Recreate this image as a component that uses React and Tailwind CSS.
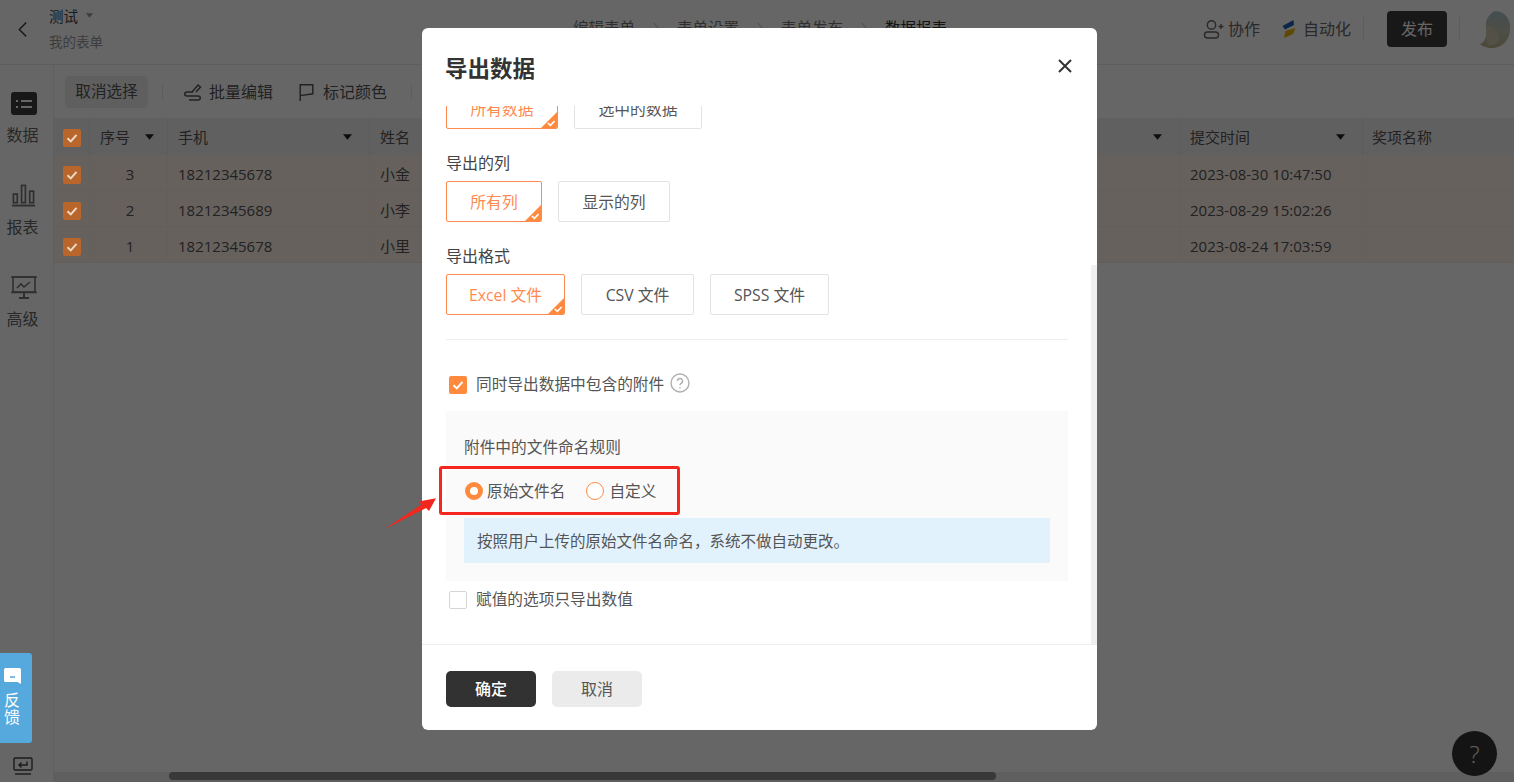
import React from "react";

const FONT = "font-['Open_Sans','Noto_Sans_CJK_SC',sans-serif]";

function Check({ className = "w-[14px] h-[14px]" }) {
  return (
    <svg viewBox="0 0 14 14" className={className} fill="none" stroke="currentColor" strokeWidth="2">
      <path d="M2.5 7.2 L5.8 10.4 L11.5 3.8" />
    </svg>
  );
}

function TableCheck() {
  return (
    <span className="relative z-10 w-[18px] h-[18px] rounded-[2px] bg-[#b9662c] text-[#ecd9c8] flex items-center justify-center">
      <Check />
    </span>
  );
}

function Caret() {
  return (
    <svg viewBox="0 0 10 6" className="w-[9px] h-[6px] text-[#222]" fill="currentColor">
      <path d="M0 0 H10 L5 6 Z" />
    </svg>
  );
}

function HeadCell({ w, label, pr }) {
  return (
    <div className={`${w} ${pr} shrink-0 h-full flex items-center justify-between pl-[10px] border-r border-[#e6e6e6]`}>
      <span>{label}</span>
      <Caret />
    </div>
  );
}

function Row({ no, phone, name, time }) {
  return (
    <div className="h-[36px] flex items-center bg-[#fff3e8] border-b border-[#f5ece4] text-[#555]">
      <div className="w-[36px] shrink-0 h-full flex items-center pl-[9px] pt-[4px]"><TableCheck /></div>
      <div className="w-[78px] shrink-0 h-full flex items-center justify-center pl-[2px] pt-[4px] border-x border-[#f8efe7]">{no}</div>
      <div className="w-[202px] shrink-0 h-full flex items-center pl-[10px] pt-[4px] border-r border-[#f8efe7]">{phone}</div>
      <div className="w-[810px] shrink-0 h-full flex items-center pl-[10px] pt-[4px] border-r border-[#f8efe7]">{name}</div>
      <div className="w-[183px] shrink-0 h-full flex items-center pl-[10px] pt-[4px] border-r border-[#f8efe7]">{time}</div>
      <div className="grow h-full" />
    </div>
  );
}

function NavItem({ icon, label }) {
  return (
    <div className="h-[92px] w-[45px] flex flex-col items-center justify-start pt-[27px] gap-[9px] text-[#666]">
      {icon}
      <span className="text-[16px] leading-[22px]">{label}</span>
    </div>
  );
}

function Choice({ label, selected, w }) {
  return (
    <div className={`${w} h-[41px] shrink-0 relative rounded-[2px] border flex items-center justify-center pt-[2px] text-[15.8px] overflow-hidden ${selected ? "border-[#ff8a50] text-[#ff8a50]" : "border-[#e3e3e3] text-[#555]"}`}>
      {label}
      {selected && (
        <svg viewBox="0 0 16 16" className="absolute right-0 bottom-0 w-[16px] h-[16px]">
          <path d="M16 0 V16 H0 Z" fill="#ff8a3d" />
          <path d="M6.8 11 L9.4 13.4 L13.6 9" fill="none" stroke="#fff" strokeWidth="1.6" />
        </svg>
      )}
    </div>
  );
}

function Sep() {
  return (
    <span className="w-[42px] flex justify-center text-[#aaa]">
      <svg viewBox="0 0 8 16" className="w-[7px] h-[14px]" fill="none" stroke="currentColor" strokeWidth="1"><path d="M1 1 L7 8 L1 15" /></svg>
    </span>
  );
}

export default function App() {
  return (
    <div className={`${FONT} relative w-full h-screen overflow-hidden bg-white text-[15px] text-[#333]`}>
      {/* Page */}
      <header className="h-[65px] flex items-center pb-[6px] border-b border-[#eaeaea]">
        <div className="w-[49px] shrink-0 flex justify-center pr-[4px] text-[#444]">
          <svg viewBox="0 0 12 18" className="w-[11px] h-[17px]" fill="none" stroke="currentColor" strokeWidth="1.6"><path d="M10 1.5 L2.5 9 L10 16.5" /></svg>
        </div>
        <div className="flex flex-col w-[200px] mt-[2px]">
          <div className="flex items-center gap-[8px] text-[#444] text-[14.5px] leading-[20px] mt-[-2px]">
            <span>测试</span>
            <svg viewBox="0 0 8 5" className="w-[7px] h-[5px] text-[#999] mb-[3px]" fill="currentColor"><path d="M0 0 H8 L4 5 Z" /></svg>
          </div>
          <span className="text-[#999] text-[13.5px] leading-[20px] mt-[5px]">我的表单</span>
        </div>
        <div className="flex items-center ml-[324px] text-[#777] text-[15.5px]">
          <span>编辑表单</span>
          <Sep />
          <span>表单设置</span>
          <Sep />
          <span>表单发布</span>
          <Sep />
          <span className="text-[#333]">数据报表</span>
        </div>
        <div className="ml-auto flex items-center h-full text-[#666] text-[16px]">
          <svg viewBox="0 0 22 20" className="w-[22px] h-[20px]" fill="none" stroke="currentColor" strokeWidth="1.4">
            <circle cx="8.5" cy="6" r="4.2" />
            <rect x="1.5" y="13" width="14" height="6" rx="3" />
            <path d="M15.5 7.5 H20.5 M18 5 V10" />
          </svg>
          <span className="ml-[3px]">协作</span>
          <svg viewBox="0 0 18 18" className="w-[18px] h-[18px] ml-[20px]">
            <path d="M13.5 0 L14 5 L5 9.5 L2.5 6 Z" fill="#1d5fb0" />
            <path d="M15.5 8 L13 14 L4 18 L5.5 11 Z" fill="#eeb400" />
          </svg>
          <span className="ml-[5px]">自动化</span>
          <span className="w-px h-[24px] bg-[#e8e8e8] ml-[12px]" />
          <span className="ml-[23px] w-[60px] h-[36px] rounded-[4px] bg-[#3d3d3d] text-white flex items-center justify-center text-[16px]">发布</span>
          <span className="w-px h-[24px] bg-[#e8e8e8] ml-[12px]" />
          <svg viewBox="0 0 33 37" className="w-[33px] h-[37px] ml-[18px] mr-[3px]">
            <defs>
              <linearGradient id="av" x1="0" y1="0" x2="0" y2="1">
                <stop offset="0" stopColor="#a9c3c9" />
                <stop offset="0.55" stopColor="#c0c4b0" />
                <stop offset="1" stopColor="#bdb48c" />
              </linearGradient>
            </defs>
            <path d="M17 0 C27 0 33 9 32 18 C32 29 24 37 14 37 C9 37 4 35 2 33 C8 31 9 24 8 16 C7 9 11 3 17 0 Z" fill="url(#av)" />
            <path d="M8 15 C14 13 21 20 21 28 C21 32 16 35 10 34 C8 28 9 21 8 15 Z" fill="#cfc9b2" />
          </svg>
        </div>
      </header>

      <div className="flex h-[717px]">
        <aside className="w-[54px] shrink-0 border-r border-[#eee] relative">
          <NavItem
            label="数据"
            icon={
              <span className="ml-[2px] w-[26px] h-[23px] rounded-[3px] bg-[#3d3d3d] flex flex-col justify-center gap-[4px] px-[5px]">
                <span className="flex gap-[3px]"><i className="w-[2px] h-[2px] bg-white" /><i className="grow h-[2px] bg-white" /></span>
                <span className="flex gap-[3px]"><i className="w-[2px] h-[2px] bg-white" /><i className="grow h-[2px] bg-white" /></span>
              </span>
            }
          />
          <NavItem
            label="报表"
            icon={
              <svg viewBox="0 0 24 23" className="ml-[2px] w-[23px] h-[23px] text-[#777]" fill="none" stroke="currentColor" strokeWidth="1.8">
                <rect x="1.5" y="10" width="4" height="9" />
                <rect x="10" y="1" width="4" height="18" />
                <rect x="18.5" y="7" width="4" height="12" />
                <path d="M0 22 H24" strokeWidth="2" />
              </svg>
            }
          />
          <NavItem
            label="高级"
            icon={
              <svg viewBox="0 0 26 23" className="ml-[2px] w-[26px] h-[23px] text-[#777]" fill="none" stroke="currentColor" strokeWidth="1.6">
                <rect x="2" y="1" width="22" height="15" />
                <path d="M0 1 H26 M0 16.5 H26" />
                <path d="M6 12 L10 8 L13 11 L19 6" />
                <path d="M13 17 V21 M8 22 H18" strokeWidth="2" />
              </svg>
            }
          />
          <div className="absolute left-[13px] top-[692px] text-[#444]">
            <svg viewBox="0 0 20 18" className="w-[20px] h-[18px]" fill="none" stroke="currentColor" strokeWidth="1.4">
              <rect x="1" y="1" width="18" height="12" rx="1" />
              <path d="M14 4.5 V8 H6 M8.5 5.5 L6 8 L8.5 10.5" />
              <path d="M2 17 H18" />
            </svg>
          </div>
        </aside>

        <main className="grow min-w-0 flex flex-col">
          <div className="h-[54px] shrink-0 flex items-center pl-[11px] text-[#555] text-[16px] border-b border-[#f0f0f0]">
            <span className="w-[83px] h-[32px] rounded-[4px] bg-[#eeeeee] flex items-center justify-center text-[15.6px]">取消选择</span>
            <span className="w-px h-[16px] bg-[#e8e8e8] ml-[14px]" />
            <svg viewBox="0 0 18 18" className="w-[18px] h-[18px] ml-[21px]" fill="none" stroke="currentColor" strokeWidth="1.5">
              <path d="M9 9 H3 C0 9 0 13 3 13 H14 C17 13 17 17 14 17 H5" />
              <path d="M8 9 L14 2 L16.5 4 L12 9" />
            </svg>
            <span className="ml-[7px]">批量编辑</span>
            <svg viewBox="0 0 18 20" className="w-[17px] h-[18px] ml-[25px]" fill="none" stroke="currentColor" strokeWidth="1.6">
              <path d="M2 20 V2 H16 V12 L2 14" />
            </svg>
            <span className="ml-[8px]">标记颜色</span>
            <span className="w-px h-[16px] bg-[#e8e8e8] ml-[24px]" />
          </div>
          <div className="h-[36px] shrink-0 flex items-center bg-[#f0f0f0] text-[#555]">
            <div className="w-[36px] shrink-0 h-full flex items-center pl-[9px] pt-[2px] border-r border-[#e6e6e6]"><TableCheck /></div>
            <HeadCell w="w-[78px]" pr="pr-[13px]" label="序号" />
            <HeadCell w="w-[202px]" pr="pr-[17px]" label="手机" />
            <HeadCell w="w-[810px]" pr="pr-[17px]" label="姓名" />
            <HeadCell w="w-[183px]" pr="pr-[17px]" label="提交时间" />
            <div className="grow pl-[9px]">奖项名称</div>
          </div>
          <Row no="3" phone="18212345678" name="小金" time="2023-08-30 10:47:50" />
          <Row no="2" phone="18212345689" name="小李" time="2023-08-29 15:02:26" />
          <Row no="1" phone="18212345678" name="小里" time="2023-08-24 17:03:59" />
          <div className="mt-auto h-[10px] bg-[#eeeeee] flex items-start">
            <div className="ml-[115px] w-[827px] h-[8px] rounded-full bg-[#8c8c8c]" />
          </div>
        </main>
      </div>

      {/* Help button under overlay */}
      <div className="absolute right-[17px] bottom-[6px] w-[45px] h-[45px] rounded-full bg-[#333] text-[#eee] flex items-center justify-center text-[24px] font-light">?</div>

      {/* Overlay */}
      <div className="absolute inset-0 bg-black/60" />

      {/* Feedback */}
      <div className="absolute left-0 top-[653px] w-[32px] h-[90px] rounded-r-[3px] bg-[#56a9dc] text-white flex flex-col items-center pt-[15px] pr-[8px]">
        <svg viewBox="0 0 17 17" className="w-[17px] h-[17px] shrink-0">
          <path d="M1.5 0 H15.5 A1.5 1.5 0 0 1 17 1.5 V16 L13.5 14 H1.5 A1.5 1.5 0 0 1 0 12.5 V1.5 A1.5 1.5 0 0 1 1.5 0 Z" fill="#fff" />
          <path d="M6 9 H11" stroke="#56a9dc" strokeWidth="1.5" />
        </svg>
        <span className="w-[16px] text-[16px] leading-[17px] mt-[7px] break-all text-center">反馈</span>
      </div>

      {/* Modal */}
      <div className="absolute left-[422px] top-[28px] w-[675px] h-[702px] rounded-[6px] bg-white flex flex-col overflow-hidden">
        <div className="h-[78px] shrink-0 flex items-start justify-between pt-[26px] pl-[23px] pr-[25px]">
          <span className="text-[22.5px] leading-[30px] font-bold text-[#333]">导出数据</span>
          <svg viewBox="0 0 14 14" className="w-[14px] h-[14px] text-[#333] mt-[5px]" fill="none" stroke="currentColor" strokeWidth="2">
            <path d="M1 1 L13 13 M13 1 L1 13" />
          </svg>
        </div>

        <div className="relative h-[539px] shrink-0 overflow-hidden border-b border-[#eeeeee]">
          <div className="absolute right-0 top-[159px] bottom-0 w-[6px] bg-[#f0f0f0]" />
          <div className="pl-[24px] pr-[29px] mt-[-18px]">
            <div className="flex gap-[16px]">
              <Choice label="所有数据" selected w="w-[112px]" />
              <Choice label="选中的数据" w="w-[128px]" />
            </div>
            <div className="text-[16px] leading-[24px] text-[#444] mt-[22px]">导出的列</div>
            <div className="flex gap-[16px] mt-[6px]">
              <Choice label="所有列" selected w="w-[96px]" />
              <Choice label="显示的列" w="w-[112px]" />
            </div>
            <div className="text-[16px] leading-[24px] text-[#444] mt-[22px]">导出格式</div>
            <div className="flex gap-[16px] mt-[6px]">
              <Choice label="Excel 文件" selected w="w-[119px]" />
              <Choice label="CSV 文件" w="w-[113px]" />
              <Choice label="SPSS 文件" w="w-[119px]" />
            </div>
            <div className="h-px bg-[#eeeeee] mt-[24px]" />

            <div className="flex items-center h-[22px] mt-[34px] pl-[3px] text-[15.7px] text-[#555]">
              <span className="w-[18px] h-[18px] rounded-[2px] bg-[#ff8a3d] text-white flex items-center justify-center"><Check /></span>
              <span className="ml-[9px] leading-[20px] pb-[2px]">同时导出数据中包含的附件</span>
              <svg viewBox="0 0 20 20" className="w-[20px] h-[20px] ml-[6px] mb-[5px] text-[#b0b0b0]" fill="none" stroke="currentColor" strokeWidth="1.4">
                <circle cx="10" cy="10" r="9" />
                <path d="M7.5 8 A2.5 2.5 0 1 1 11 10.3 C10.2 10.7 10 11.2 10 12.2" />
                <path d="M10 14 V15.2" />
              </svg>
            </div>

            <div className="bg-[#fafafa] mt-[15px] h-[170px] pl-[18px] pr-[18px] pt-[25px] text-[15.7px] text-[#555]">
              <div className="leading-[22px]">附件中的文件命名规则</div>
              <div className="relative flex items-center mt-[22px] h-[22px] pl-[1px]">
                <span className="w-[18px] h-[18px] rounded-full border-[5px] border-[#ff8a3d] bg-white" />
                <span className="ml-[4px] pt-[2px]">原始文件名</span>
                <span className="w-[18px] h-[18px] rounded-full border border-[#ff8a3d] bg-white ml-[21px]" />
                <span className="ml-[5px] pt-[2px]">自定义</span>
                <div className="absolute left-[-25px] top-[-14px] w-[241px] h-[49px] rounded-[3px] border-[3px] border-[#f5261e]" />
              </div>
              <div className="h-[45px] bg-[#e2f2fd] mt-[16px] pl-[13px] pt-[2px] flex items-center text-[15.5px]">按照用户上传的原始文件名命名，系统不做自动更改。</div>
            </div>

            <div className="flex items-center h-[22px] mt-[8px] pl-[3px] text-[15.7px] text-[#555]">
              <span className="w-[18px] h-[18px] rounded-[2px] border border-[#d5d5d5] bg-white" />
              <span className="ml-[9px] leading-[20px] pb-[2px]">赋值的选项只导出数值</span>
            </div>
          </div>
        </div>

        <div className="grow flex items-start pl-[24px] pt-[26px] gap-[16px] text-[16px]">
          <span className="w-[90px] h-[36px] rounded-[5px] bg-[#323232] text-white font-medium flex items-center justify-center">确定</span>
          <span className="w-[90px] h-[36px] rounded-[5px] bg-[#ebebeb] text-[#555] flex items-center justify-center">取消</span>
        </div>
      </div>

      {/* Annotation arrow lying over the dialog and the backdrop */}
      <svg viewBox="0 0 60 50" className="absolute left-[380px] top-[490px] w-[60px] h-[50px]">
        <path d="M4.3 39.3 L41.5 14.5 L38.7 11.5 L56 8.3 L49 21 L46 18 Z" fill="#f5261e" />
      </svg>
    </div>
  );
}
